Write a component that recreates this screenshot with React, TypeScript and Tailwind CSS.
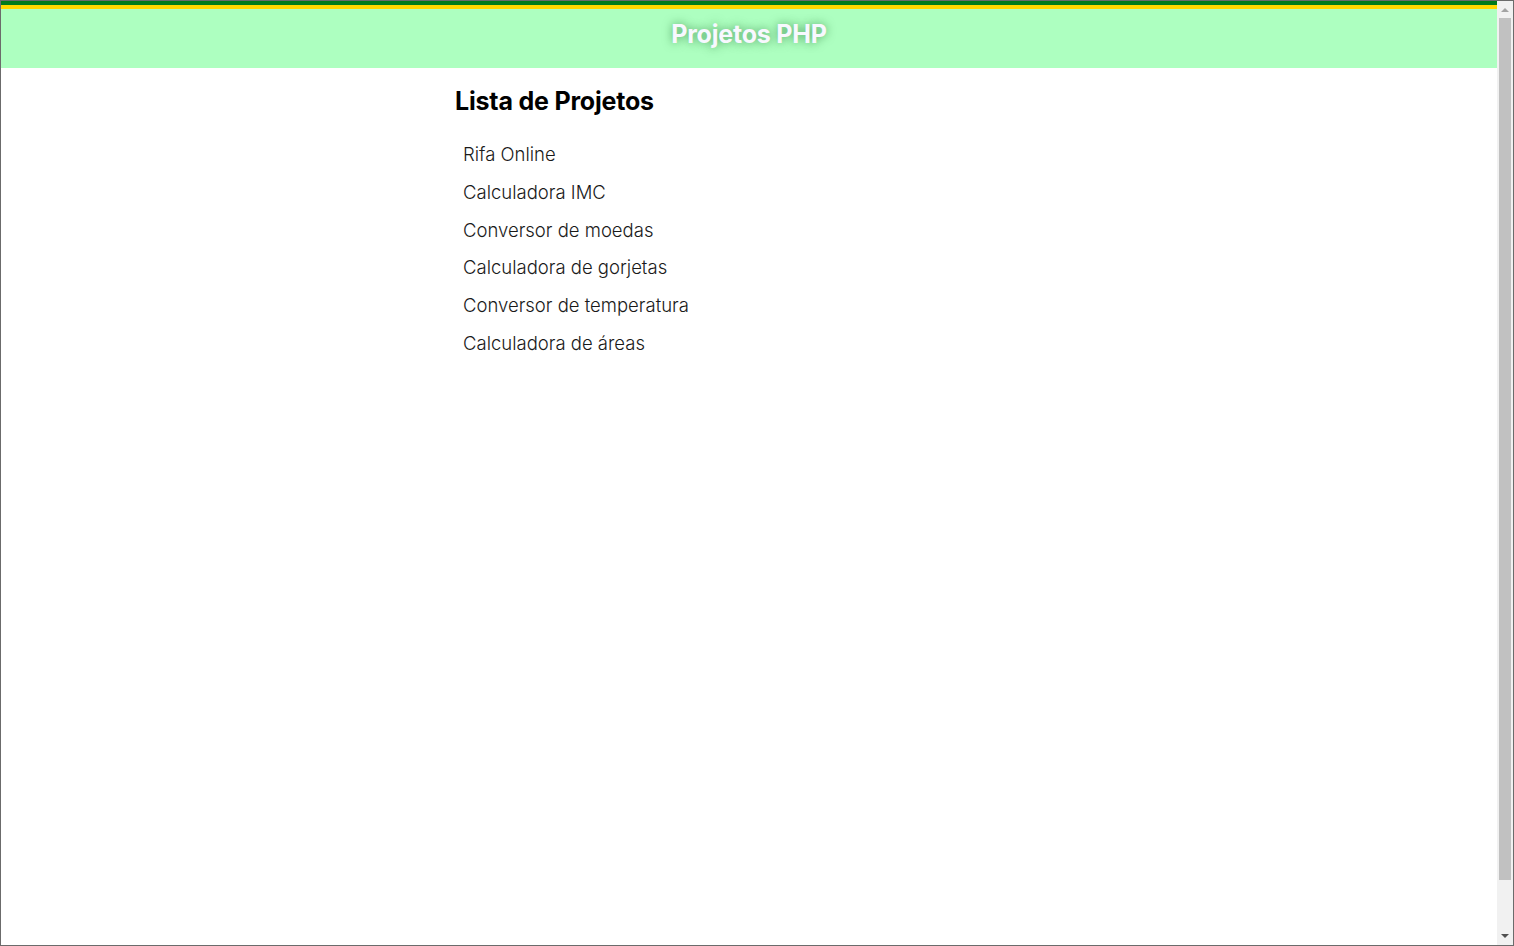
const projetos = [
  "Rifa Online",
  "Calculadora IMC",
  "Conversor de moedas",
  "Calculadora de gorjetas",
  "Conversor de temperatura",
  "Calculadora de áreas",
];

function Scrollbar() {
  return (
    <div className="w-[16px] shrink-0 bg-[#f1f1f1] flex flex-col items-center">
      <div className="h-[17px] flex items-center justify-center">
        <svg width="8" height="5" viewBox="0 0 8 5">
          <path d="M0 5 L4 1 L8 5 Z" fill="#a3a3a3" />
        </svg>
      </div>
      <div className="w-[12px] h-[862px] bg-[#c1c1c1]" />
      <div className="flex-1" />
      <div className="h-[17px] flex items-center justify-center">
        <svg width="8" height="5" viewBox="0 0 8 5">
          <path d="M0 0 L8 0 L4 4 Z" fill="#505050" />
        </svg>
      </div>
    </div>
  );
}

export default function App() {
  return (
    <div
      className="h-[946px] w-[1514px] border border-[#6b6b6b] flex overflow-hidden bg-white"
      style={{ fontFamily: "Inter, 'Noto Sans', sans-serif" }}
    >
      <div className="flex-1 flex flex-col">
        {/* Header */}
        <header>
          <div className="h-[4px] bg-[#007a1c]" />
          <div className="h-[4px] bg-[#ffd700]" />
          <div className="h-[59px] bg-[#adffc0] flex justify-center pt-[9px]">
            <h1 className="text-[#f8f8ff] font-bold text-[25px] leading-[32px] tracking-[-0.2px] [text-shadow:0_0_10px_rgba(0,80,20,0.55)]">
              Projetos PHP
            </h1>
          </div>
        </header>

        {/* Lista */}
        <main className="w-[588px] mx-auto pt-[17px]">
          <h2 className="text-[25px] font-bold text-black tracking-[-0.2px] leading-[32px]">
            Lista de Projetos
          </h2>
          <ul className="mt-[19px] pl-[8px] flex flex-col">
            {projetos.map((p) => (
              <li key={p} className="text-[18.5px] leading-[37.8px] text-[#1a1a1a] font-[350]">
                {p}
              </li>
            ))}
          </ul>
        </main>
      </div>
      <Scrollbar />
    </div>
  );
}
